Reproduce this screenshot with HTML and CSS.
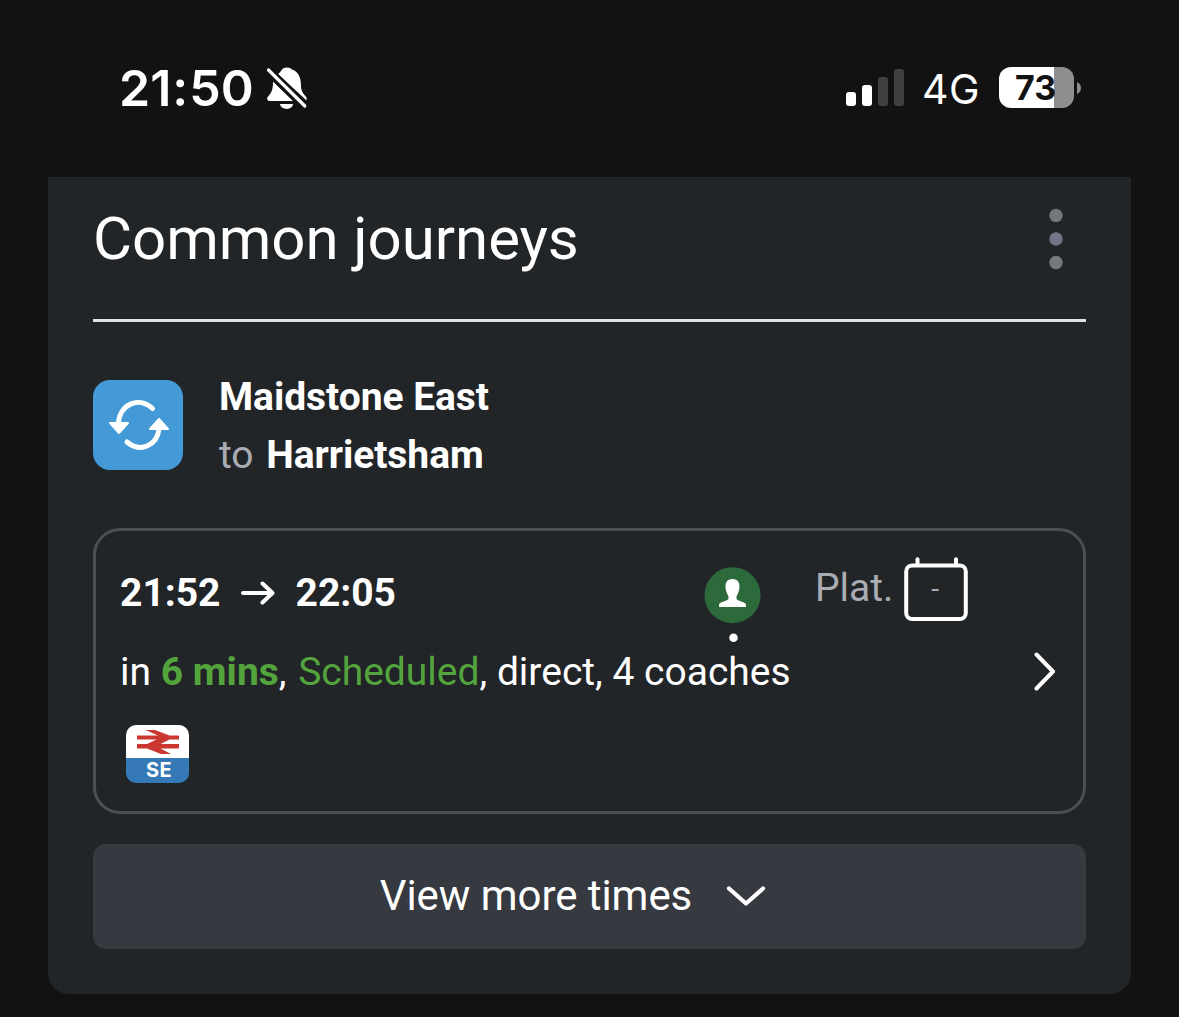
FILE: index.html
```html
<!DOCTYPE html>
<html lang="en">
<head>
<meta charset="utf-8">
<title>Common journeys</title>
<link rel="stylesheet" href="styles.css">
</head>
<body>
<header class="status">
  <span class="clock">21<span class="colon">:</span>50</span>
  <svg class="bell" width="42" height="44" viewBox="0 0 42 44">
    <path d="M12 8Q15 5.500 16 3.500C17.500.800 24.500.800 26 3.500C33 6 35 12 35 20C35 26 38 28 40.500 31.500L40.500 34.500Z" fill="#fff"/>
    <path d="M7 15.500L27 35H4C.500 35 .500 31.500 2.500 30C6 26 7 23 7 15.500Z" fill="#fff"/>
    <path d="M14 38H27C26.500 44.500 15 44.500 14 38Z" fill="#fff"/>
    <path d="M3 5L38.500 40" stroke="#121212" stroke-width="8.500"/>
    <path d="M2.500 4L38.800 40" stroke="#fff" stroke-width="3.200" stroke-linecap="round"/>
  </svg>
  <div class="signal"><i class="bar b1"></i><i class="bar b2"></i><i class="bar b3"></i><i class="bar b4"></i></div>
  <span class="network">4G</span>
  <div class="battery">73</div>
  <svg class="battery-cap" width="4" height="12" viewBox="0 0 4 12"><path d="M0 0Q4 2 4 6T0 12Z" fill="#8e8e8e"/></svg>
</header>
<main class="panel">
  <div class="panel-head">
    <h1>Common journeys</h1>
    <svg class="menu" width="14" height="62" viewBox="0 0 14 62"><circle cx="7" cy="7.500" r="6.700" fill="#74787d"/><circle cx="7" cy="31" r="6.700" fill="#737587"/><circle cx="7" cy="54.500" r="6.700" fill="#747a7c"/></svg>
  </div>
  <section class="route">
    <svg width="90" height="90" viewBox="0 0 90 90">
      <rect width="90" height="90" rx="17" fill="#4499d7"/>
      <g fill="none" stroke="#fff" stroke-width="5" stroke-linecap="round"><path d="M59.500 28.500C45 15.500 26.500 25 25.500 43"/><path d="M34 62C48 73.500 64 65 66 49"/></g>
      <g fill="#fff" stroke="#fff" stroke-width="2" stroke-linejoin="round"><path d="M17 43H35L26 53Z"/><path d="M57 49H75L66 39Z"/></g>
    </svg>
    <div class="stations"><div><b>Maidstone East</b></div><div><span class="to">to</span> <b>Harrietsham</b></div></div>
  </section>
  <section class="service">
    <div class="service-top">
      <div class="times"><b>21:52</b>
        <svg width="34" height="24" viewBox="0 0 34 24" fill="none" stroke="#fff" stroke-width="4" stroke-linecap="round" stroke-linejoin="round"><path d="M2 12H31M21.500 2.500L31.500 12L21.500 21.500"/></svg>
        <b>22:05</b></div>
      <svg class="occupancy" width="58" height="77" viewBox="0 0 58 77"><circle cx="28.500" cy="28.200" r="28" fill="#2c6a3c"/><path d="M28.500 12C34 12 36.300 16 35.300 22C34.700 26 33 28 32.500 29.500V32C34 34.500 42 34.500 42 38V40H15V38C15 34.500 23 34.500 24.500 32V29.500C24 28 22.300 26 21.700 22C20.700 16 23 12 28.500 12Z" fill="#fff"/><circle cx="29.500" cy="70.700" r="4.300" fill="#fff"/></svg>
      <span class="plat">Plat.</span>
      <div class="platform"><svg width="64" height="64" viewBox="0 0 64 64" fill="none" stroke="#fff" stroke-width="4"><rect x="2.200" y="8.500" width="59.600" height="53.500" rx="6"/><path d="M13.500 8V2.200M52 8V2.200" stroke-linecap="round"/></svg><span>-</span></div>
    </div>
    <div class="service-info">
      <p>in <b class="green">6 mins</b>, <span class="green scheduled">Scheduled</span>, direct, 4 coaches</p>
      <svg width="22" height="40" viewBox="0 0 22 40" fill="none" stroke="#fff" stroke-width="4" stroke-linecap="round" stroke-linejoin="round"><path d="M2.500 3.500L19 20.500L2.500 37.500"/></svg>
    </div>
    <div class="operator">
      <svg width="63" height="33" viewBox="0 0 63 33"><g fill="#cb3832"><path d="M11 10.500H32L19.500 5H29L43.500 10.500H53V14.500H43.500L34.500 19H53V23.500H34.500L45 29H35L21 23.500H11V19H21L30.500 14.500H11Z"/></g></svg>
      <span>SE</span>
    </div>
  </section>
  <button class="more"><span>View more times</span><svg width="40" height="24" viewBox="0 0 40 24" fill="none" stroke="#fff" stroke-width="4.200" stroke-linecap="round" stroke-linejoin="round"><path d="M3 4.500L20 19.500L37 4.500"/></svg></button>
</main>
</body>
</html>
```
FILE: styles.css
```css
* { box-sizing: border-box; }
body {
  margin: 0;
  height: 1017px;
  overflow: hidden;
  background: #121212;
  color: #fff;
  font-family: Roboto, sans-serif;
}
.status {
  height: 177px;
  display: flex;
  align-items: center;
  padding: 0 98px 2px 119px;
  font-family: Inter, sans-serif;
}
.clock {
  width: 147px;
  font-size: 50px;
  font-weight: 600;
  line-height: 60px;
}
.colon { margin: 0 1px; }
.bell { flex: none; }
.signal {
  display: flex;
  align-items: flex-end;
  gap: 6px;
  height: 37px;
  margin-left: auto;
}
.bar {
  width: 10px;
  border-radius: 3px;
  background: #404040;
}
.b1 { height: 14px; background: #fff; }
.b2 { height: 21px; background: #fff; }
.b3 { height: 29px; }
.b4 { height: 37px; }
.network {
  width: 57px;
  margin-left: 18px;
  margin-right: 20px;
  padding-top: 2px;
  font-size: 41px;
  line-height: 50px;
  letter-spacing: 0.5px;
  white-space: nowrap;
}
.battery {
  width: 75px;
  height: 41px;
  padding-right: 2px;
  border-radius: 12px;
  background: linear-gradient(90deg, #fff 55px, #8e8e8e 55px);
  color: #121212;
  font-size: 34px;
  font-weight: 700;
  line-height: 41px;
  text-align: center;
}
.battery-cap { flex: none; margin-left: 3px; }
.panel {
  width: 1083px;
  height: 817px;
  margin: 0 48px;
  padding: 0 45px;
  border-radius: 0 0 21px 21px;
  background: #222528;
}
.panel-head {
  display: flex;
  align-items: center;
  justify-content: space-between;
  height: 145px;
  padding: 0 23px 19px 0;
  border-bottom: 3px solid #dfe3e5;
}
h1 {
  margin: 0;
  font-size: 60px;
  font-weight: 400;
  letter-spacing: -0.06px;
}
.route {
  display: flex;
  align-items: center;
  gap: 36px;
  height: 206px;
}
.stations {
  padding-top: 2px;
  font-size: 39px;
  line-height: 58px;
  letter-spacing: -0.05px;
}
.to { margin-right: 3px; }
.to, .plat, .platform { color: #a9acb3; }
.service {
  height: 286px;
  padding: 0 24px;
  border: 3px solid #4c4f53;
  border-radius: 27px;
  font-size: 39px;
}
.service-top {
  display: flex;
  align-items: flex-start;
  height: 120px;
}
.times {
  display: flex;
  align-items: center;
  width: 584px;
  height: 123px;
}
.times svg { margin: 0 20.5px; }
.occupancy { margin-top: 36px; }
.plat {
  width: 89px;
  margin: 34px 0 0 53px;
  line-height: 46px;
}
.platform {
  position: relative;
  width: 64px;
  height: 64px;
  margin-top: 26px;
}
.platform span {
  position: absolute;
  inset: 0 2px 0 0;
  font-size: 28px;
  line-height: 64px;
  text-align: center;
}
.service-info {
  display: flex;
  align-items: center;
  justify-content: space-between;
  height: 40px;
  padding-right: 3px;
}
.service-info p {
  margin: 0;
  padding-top: 2px;
}
.green { color: #54a43d; }
.scheduled { margin-left: 2px; }
.operator {
  width: 63px;
  height: 58px;
  margin: 34px 0 0 6px;
  border-radius: 10px;
  background: linear-gradient(#fff 33px, #3579b7 33px);
  overflow: hidden;
}
.operator svg { display: block; }
.operator span {
  display: block;
  padding-left: 3px;
  font: 700 20px/25px Inter, sans-serif;
  text-align: center;
  letter-spacing: 0.5px;
}
.more {
  display: flex;
  align-items: center;
  justify-content: center;
  gap: 34px;
  width: 100%;
  height: 105px;
  margin-top: 30px;
  padding: 0 33px 2px 0;
  border: 0;
  border-radius: 13px;
  background: #363940;
  color: #fff;
  font: 400 42px/50px Roboto, sans-serif;
  letter-spacing: -0.05px;
}
```
